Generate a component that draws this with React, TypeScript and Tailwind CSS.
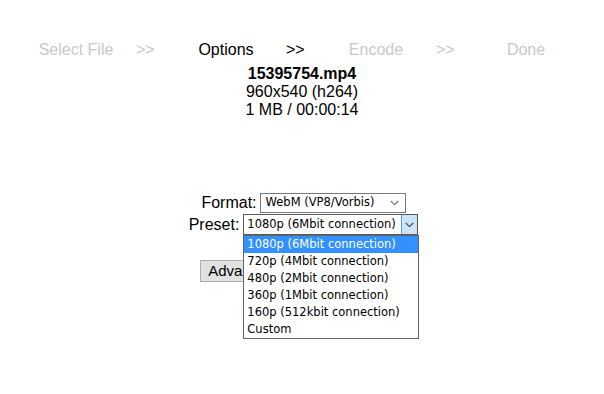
import React from "react";

function Chevron({ color = "#6d6d6d" }: { color?: string }) {
  return (
    <svg width="9" height="6" viewBox="0 0 9 6" fill="none">
      <path d="M0.8 1 L4.5 4.6 L8.2 1" stroke={color} strokeWidth="1.1" />
    </svg>
  );
}

const items = [
  "1080p (6Mbit connection)",
  "720p (4Mbit connection)",
  "480p (2Mbit connection)",
  "360p (1Mbit connection)",
  "160p (512kbit connection)",
  "Custom",
];

export default function App() {
  return (
    <div className="w-[604px] h-[394px] bg-white text-black overflow-hidden font-['Liberation_Sans',Arial,sans-serif]">
      <div className="flex pt-[41px] pl-[26px] text-[16px] leading-[18px]">
        <div className="w-[100px] text-center text-[#c9c9c9]">Select File</div>
        <div className="w-[50px] pl-[10px] text-[#c9c9c9]">&gt;&gt;</div>
        <div className="w-[100px] text-center text-black">Options</div>
        <div className="w-[50px] pl-[10px] text-black">&gt;&gt;</div>
        <div className="w-[100px] text-center text-[#c9c9c9]">Encode</div>
        <div className="w-[50px] pl-[10px] text-[#c9c9c9]">&gt;&gt;</div>
        <div className="w-[100px] text-center text-[#c9c9c9]">Done</div>
      </div>

      <div className="mt-[6px] flex flex-col items-center text-[16px] leading-[18px]">
        <div className="font-bold">15395754.mp4</div>
        <div>960x540 (h264)</div>
        <div>1 MB / 00:00:14</div>
      </div>

      <div className="mt-[74px] pl-[3px] flex flex-col items-center text-[16px]">
        <div className="flex items-center gap-[3px]">
          <span className="leading-[20px]">Format:</span>
          <div className="w-[146px] h-[20px] border border-[#7a7a7a] bg-white flex items-center justify-between pl-[5px] pr-[6px] font-['DejaVu_Sans',Verdana,sans-serif] text-[11.5px]">
            <span>WebM (VP8/Vorbis)</span>
            <Chevron />
          </div>
        </div>
        <div className="flex items-center gap-[4px] mt-[1px]">
          <span className="leading-[21px]">Preset:</span>
          <div className="relative">
            <div className="w-[175px] h-[21px] border border-[#5a5a5a] bg-white flex items-stretch font-['DejaVu_Sans',Verdana,sans-serif] text-[11.5px]">
              <span className="flex-1 pl-[3px] flex items-center">1080p (6Mbit connection)</span>
              <div className="w-[16px] bg-[#cce4f7] border-l border-[#569de5] flex items-center justify-center">
                <Chevron color="#404040" />
              </div>
            </div>
            <div className="absolute left-0 top-[21px] w-[176px] border border-[#646464] bg-white z-10 font-['DejaVu_Sans',Verdana,sans-serif] text-[11.5px] leading-[17px]">
              {items.map((it, i) => (
                <div
                  key={it}
                  className={
                    i === 0
                      ? "h-[17px] pl-[3px] bg-[#3390ff] text-white"
                      : "h-[17px] pl-[3px] text-black"
                  }
                >
                  {it}
                </div>
              ))}
            </div>
          </div>
        </div>
        <div className="mt-[25px] flex gap-[5px] text-[15px]">
          <button className="h-[22px] px-[7px] bg-[#e1e1e1] border border-[#adadad] leading-[20px]">
            Advanced Options
          </button>
          <button className="h-[22px] px-[5px] bg-[#e1e1e1] border border-[#adadad] leading-[20px]">
            Encode
          </button>
        </div>
      </div>
    </div>
  );
}
